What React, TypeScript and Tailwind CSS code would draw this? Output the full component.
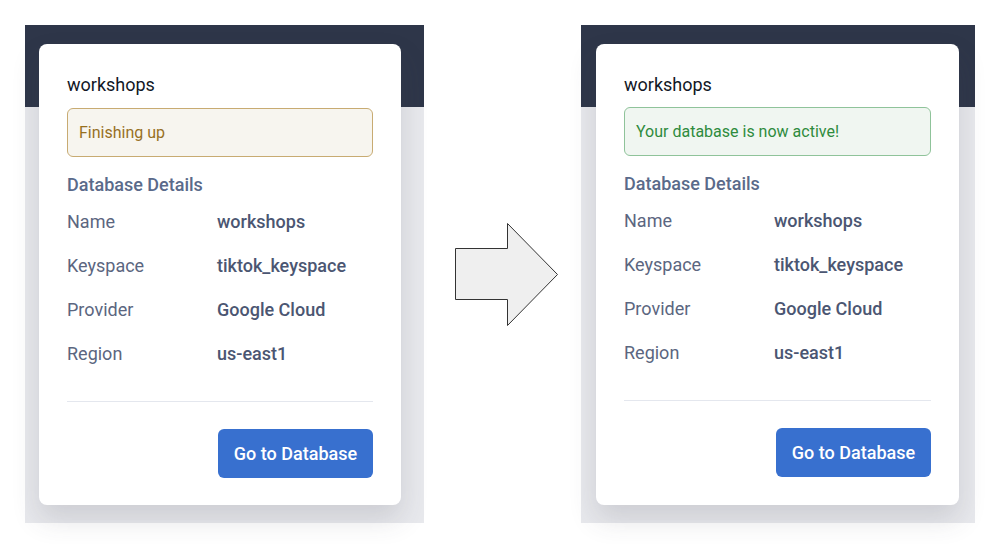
import React from "react";

type Props = { status: "pending" | "active"; panelW: number; cardW: number; padL: number };

const rows = [
  ["Name", "workshops"],
  ["Keyspace", "tiktok_keyspace"],
  ["Provider", "Google Cloud"],
  ["Region", "us-east1"],
];

function Panel({ status, panelW, cardW, padL }: Props) {
  return (
    <div
      className="h-[498px] bg-[linear-gradient(to_bottom,#2e3649_82px,#e8e9ed_82px)] pt-[19px]"
      style={{ width: panelW, paddingLeft: padL }}
    >
      <div
        className="h-[461px] rounded-lg bg-white px-[28px] pt-[29px] shadow-[0_14px_28px_rgba(60,64,72,0.16)]"
        style={{ width: cardW }}
      >
        <div className="text-[18px] leading-6 text-[#121826]">workshops</div>
        {status === "pending" ? (
          <div className="mt-[11px] flex h-[49px] items-center rounded-md border border-[#c8ab72] bg-[#f7f5ef] px-[11px] text-[16px] text-[#97701f]">
            Finishing up
          </div>
        ) : (
          <div className="mt-[10px] flex h-[49px] items-center rounded-md border border-[#8fc39a] bg-[#f0f6f1] px-[11px] text-[16px] text-[#2e8b3d]">
            Your database is now active!
          </div>
        )}
        <div className="mt-[16px] text-[18px] font-medium leading-6 text-[#5a6a8a]">Database Details</div>
        <div className="mt-[2px]">
          {rows.map(([k, v]) => (
            <div key={k} className="flex h-[44px] items-center text-[18px]">
              <div className="w-[150px] text-[#5b6680]">{k}</div>
              <div className="font-medium text-[#4b5672]">{v}</div>
            </div>
          ))}
        </div>
        <div className="mt-[26px] h-px bg-[#e4e7ee]" />
        <div className="mt-[27px] flex justify-end">
          <button className="h-[49px] w-[155px] rounded-md bg-[#3870cf] text-[18px] font-medium text-white">
            Go to Database
          </button>
        </div>
      </div>
    </div>
  );
}

export default function App() {
  return (
    <div
      className="flex h-[544px] w-[1000px] items-start bg-white pt-[25px] pl-[25px]"
      style={{ fontFamily: "Roboto, 'Noto Sans', sans-serif" }}
    >
      <Panel status="pending" panelW={399} cardW={362} padL={14} />
      <div className="flex h-[498px] w-[157px] items-center">
        <svg width="157" height="498" viewBox="0 0 157 498" className="block">
          <polygon
            points="31.5,223.5 83.5,223.5 83.5,198.5 133.5,249.5 83.5,300.5 83.5,274.5 31.5,274.5"
            fill="#efefef"
            stroke="#333"
            strokeWidth="1"
          />
        </svg>
      </div>
      <Panel status="active" panelW={394} cardW={363} padL={15} />
    </div>
  );
}
